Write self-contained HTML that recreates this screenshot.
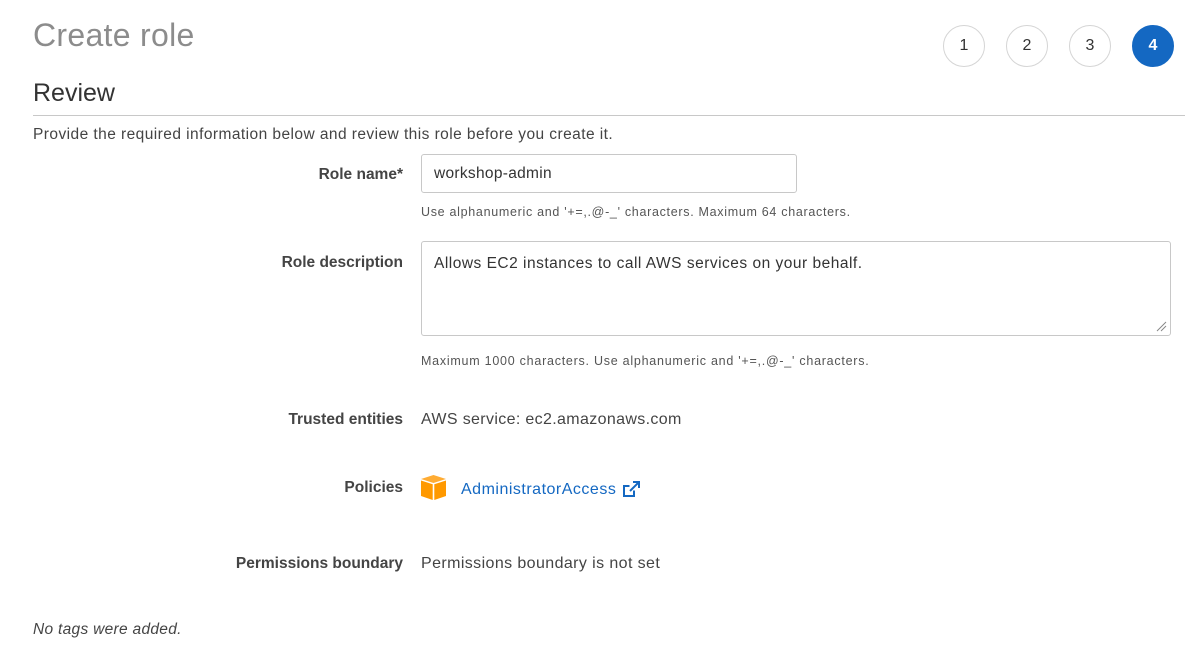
<!DOCTYPE html>
<html><head><style>
body{margin:0;width:1192px;height:646px;background:#fff;font-family:"Liberation Sans",sans-serif;color:#444;position:relative;overflow:hidden}
.a{position:absolute;white-space:nowrap}
.lbl{position:absolute;right:789px;font-weight:bold;font-size:15.5px;color:#444;white-space:nowrap}
.c{position:absolute;top:25px;width:40px;height:40px;border:1px solid #d5d5d5;border-radius:50%;text-align:center;line-height:40px;font-size:16px;color:#333;background:#fff}
.hint{font-size:12.5px;color:#555;letter-spacing:0.7px}
</style></head><body>
<div class="a" style="left:33px;top:17px;font-size:32px;color:#8c8c8c;letter-spacing:0.3px">Create role</div>
<div class="c" style="left:943px">1</div>
<div class="c" style="left:1006px">2</div>
<div class="c" style="left:1069px">3</div>
<div class="c" style="left:1132px;background:#1468c2;border-color:#1468c2;color:#fff;font-weight:bold">4</div>
<div class="a" style="left:33px;top:79px;font-size:25px;color:#333">Review</div>
<div class="a" style="left:33px;top:115px;width:1152px;height:1px;background:#c8c8c8"></div>
<div class="a" style="left:33px;top:126px;font-size:15.5px;letter-spacing:0.44px">Provide the required information below and review this role before you create it.</div>
<div class="lbl" style="top:166px">Role name*</div>
<div class="a" style="left:421px;top:154px;width:374px;height:37px;border:1px solid #c8c8c8;border-radius:3px"></div>
<div class="a" style="left:434px;top:165px;font-size:15.5px;color:#333;letter-spacing:0.3px">workshop-admin</div>
<div class="a hint" style="left:421px;top:205px">Use alphanumeric and '+=,.@-_' characters. Maximum 64 characters.</div>
<div class="lbl" style="top:254px">Role description</div>
<div class="a" style="left:421px;top:241px;width:748px;height:93px;border:1px solid #c8c8c8;border-radius:3px"></div>
<svg class="a" style="left:1155px;top:320px" width="12" height="12"><path d="M2 11L11 2M6 11L11 6" stroke="#888" stroke-width="1"/></svg>
<div class="a" style="left:434px;top:255px;font-size:15.5px;color:#333;letter-spacing:0.5px">Allows EC2 instances to call AWS services on your behalf.</div>
<div class="a hint" style="left:421px;top:354px;letter-spacing:0.75px">Maximum 1000 characters. Use alphanumeric and '+=,.@-_' characters.</div>
<div class="lbl" style="top:411px">Trusted entities</div>
<div class="a" style="left:421px;top:411px;font-size:16px;letter-spacing:0.35px">AWS service: ec2.amazonaws.com</div>
<div class="lbl" style="top:479px">Policies</div>
<svg class="a" style="left:421px;top:475px" width="25" height="25" viewBox="0 0 25 25"><path d="M0 4L12.5 0L25 4L12.5 8Z" fill="#ffac33"/><path d="M0 5.5L11.7 9.3V25L0 21Z" fill="#ff9900"/><path d="M25 5.5L13.3 9.3V25L25 21Z" fill="#ff9900"/></svg>
<div class="a" style="left:461px;top:481px;font-size:16px;color:#1468c2;letter-spacing:0.5px">AdministratorAccess</div>
<svg class="a" style="left:622px;top:481px" width="18" height="17" viewBox="0 0 18 17"><path d="M12 9.5V15H2V5H7.5" fill="none" stroke="#1468c2" stroke-width="2"/><path d="M8 10L16 2M11 1H17V7" fill="none" stroke="#1468c2" stroke-width="2"/></svg>
<div class="lbl" style="top:555px">Permissions boundary</div>
<div class="a" style="left:421px;top:555px;font-size:16px;letter-spacing:0.4px">Permissions boundary is not set</div>
<div class="a" style="left:33px;top:621px;font-size:15.5px;font-style:italic;letter-spacing:0.3px">No tags were added.</div>
</body></html>
